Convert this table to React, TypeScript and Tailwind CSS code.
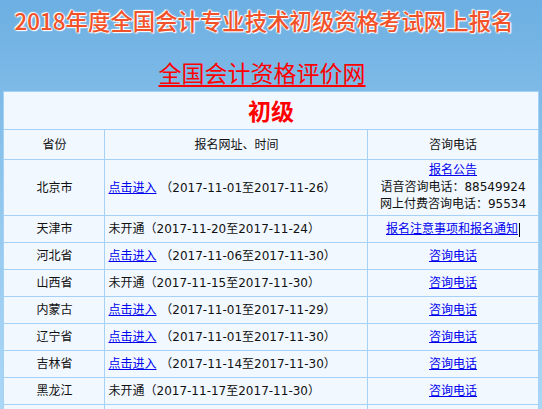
const rows = [
  { prov: "天津市", open: false, date: "2017-11-20至2017-11-24", info: "报名注意事项和报名通知", caret: true },
  { prov: "河北省", open: true, date: "2017-11-06至2017-11-30", info: "咨询电话" },
  { prov: "山西省", open: false, date: "2017-11-15至2017-11-30", info: "咨询电话" },
  { prov: "内蒙古", open: true, date: "2017-11-01至2017-11-29", info: "咨询电话" },
  { prov: "辽宁省", open: true, date: "2017-11-01至2017-11-30", info: "咨询电话" },
  { prov: "吉林省", open: true, date: "2017-11-14至2017-11-30", info: "咨询电话" },
  { prov: "黑龙江", open: false, date: "2017-11-17至2017-11-30", info: "咨询电话" },
];

const cell = "border border-[#a6d1f6] px-[3px] py-0 align-middle";

const Status = ({ open, date }: { open: boolean; date: string }) =>
  open ? (
    <>
      <a href="#" className="text-[#0000ee] underline">点击进入</a> （{date}）
    </>
  ) : (
    <>未开通（{date}）</>
  );

export default function App() {
  return (
    <div className="h-[409px] overflow-hidden bg-gradient-to-b from-[#6cafe2] via-[#93c8ee] to-[#abd7f6] font-['Noto_Sans_CJK_SC',sans-serif]">
      <div className="h-[91px] text-center">
        <h1 className="pt-[7px] pr-[14px] text-[22.4px] leading-[26px] font-medium text-[#f2522a] [text-shadow:0_0_2px_#fff,0_0_2px_#fff,0_0_1px_#fff,1px_1px_1px_#fff,-1px_-1px_1px_#fff]">
          2018年度全国会计专业技术初级资格考试网上报名
        </h1>
        <div className="pr-[18px]">
          <a href="#" className="mt-[25px] inline-block text-[23px] leading-[28px] text-[#ff0000] underline underline-offset-[3px]">
            全国会计资格评价网
          </a>
        </div>
      </div>

      <table className="mx-auto w-[534px] table-fixed border-collapse bg-[#f1f8ff] text-[12px] text-[#111] font-['DejaVu_Sans','Noto_Sans_CJK_SC',sans-serif]">
        <colgroup>
          <col className="w-[101px]" />
          <col className="w-[263px]" />
          <col className="w-[170px]" />
        </colgroup>
        <tbody>
          <tr className="h-[38px]">
            <td colSpan={3} className={`${cell} text-center`}>
              <span className="text-[23px] font-bold text-[#ff0000] font-['Noto_Sans_CJK_SC',sans-serif]">初级</span>
            </td>
          </tr>
          <tr className="h-[30px] text-center">
            <td className={cell}>省份</td>
            <td className={cell}>报名网址、时间</td>
            <td className={cell}>咨询电话</td>
          </tr>
          <tr className="h-[56px]">
            <td className={`${cell} text-center`}>北京市</td>
            <td className={cell}>
              <Status open date="2017-11-01至2017-11-26" />
            </td>
            <td className={`${cell} text-center leading-[17px]`}>
              <a href="#" className="text-[#0000ee] underline">报名公告</a>
              <div>语音咨询电话：88549924</div>
              <div>网上付费咨询电话：95534</div>
            </td>
          </tr>
          {rows.map((r) => (
            <tr key={r.prov} className="h-[27px]">
              <td className={`${cell} text-center`}>{r.prov}</td>
              <td className={cell}>
                <Status open={r.open} date={r.date} />
              </td>
              <td className={`${cell} text-center`}>
                <a href="#" className="text-[#0000ee] underline">{r.info}</a>
                {r.caret && <span className="ml-px inline-block h-[14px] w-px bg-black align-middle" />}
              </td>
            </tr>
          ))}
          <tr className="h-[27px]">
            <td className={cell} />
            <td className={cell} />
            <td className={cell} />
          </tr>
        </tbody>
      </table>
    </div>
  );
}
